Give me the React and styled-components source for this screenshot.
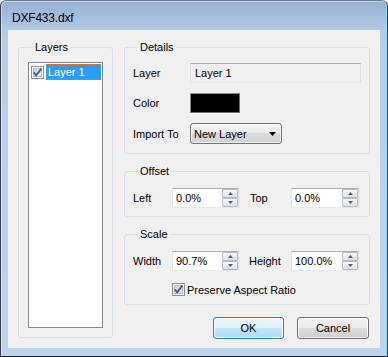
import React from 'react';
import styled, { createGlobalStyle } from 'styled-components';

const GlobalStyle = createGlobalStyle`
  html, body {
    margin: 0;
    padding: 0;
    background: #fff;
  }
  body {
    font-family: "Liberation Sans", Arial, sans-serif;
    font-size: 11px;
    color: #000;
  }
  * {
    box-sizing: border-box;
  }
`;

const Window = styled.div`
  width: 388px;
  height: 357px;
  display: flex;
  flex-direction: column;
  border: 1px solid;
  border-color: #6b7b8f #34404e #1b2129 #34404e;
  border-radius: 6px 6px 0 0;
  background: linear-gradient(#95b0d1 0, #b6cee9 34px, #bcd4ec 100%);
  box-shadow: inset -1px 0 0 #8fdff2, inset 1px 1px 0 rgba(255, 255, 255, 0.45);
  overflow: hidden;
`;

const TitleBar = styled.div`
  height: 29px;
  padding: 10px 0 0 11px;
  font-size: 12px;
  line-height: 14px;
  letter-spacing: -0.2px;
`;

const Client = styled.div`
  flex: 1;
  margin: 0 7px 8px;
  padding: 10px;
  display: flex;
  gap: 11px;
  background: #f0f0f0;
`;

const Group = styled.fieldset`
  margin: 0;
  min-width: 0;
  padding: ${p => p.$pad || '10px 8px 8px'};
  border: 1px solid #d5dfe5;
  border-radius: 3px;
  display: flex;
  flex-direction: column;
  gap: ${p => p.$gap || 10}px;
`;

const LayersGroup = styled(Group)`
  width: 95px;
  flex: none;
`;

const Legend = styled.legend`
  padding: 0 2px;
  margin-left: 5px;
  line-height: 14px;
`;

const List = styled.div`
  flex: 1;
  background: #fff;
  border: 1px solid #828790;
  padding: 1px 1px 0 2px;
`;

const ListItem = styled.div`
  height: 16px;
  display: flex;
  align-items: center;
  gap: 2px;
`;

const ItemLabel = styled.div`
  flex: 1;
  height: 16px;
  padding-left: 1px;
  line-height: 14px;
  color: #fff;
  background: #3399ff;
  border: 1px dotted #d0802a;
`;

const Column = styled.div`
  flex: 1;
  display: flex;
  flex-direction: column;
  gap: 10px;
`;

const Row = styled.div`
  display: flex;
  align-items: center;
  min-height: ${p => p.$h || 20}px;
  padding-left: ${p => p.$indent || 0}px;
  gap: ${p => p.$gap || 0}px;
`;

const Label = styled.span`
  width: ${p => p.$w}px;
  margin-left: ${p => p.$ml || 0}px;
  flex: none;
`;

const TextBox = styled.input`
  flex: 1;
  min-width: 0;
  height: 20px;
  padding: 0 4px;
  font: inherit;
  color: #000;
  background: #f0f0f0;
  border: 1px solid;
  border-color: #abadb3 #dbdfe6 #e3e9ef #e2e3ea;
  outline: none;
`;

const Swatch = styled.div`
  width: 50px;
  height: 20px;
  background: ${p => p.$color};
  border: 1px solid;
  border-color: #8c8c8c #707070 #707070 #8c8c8c;
  box-shadow: 0 1px 0 #fff;
`;

const Select = styled.div`
  width: 92px;
  height: 21px;
  display: flex;
  align-items: center;
  justify-content: space-between;
  padding: 0 5px 0 3px;
  border: 1px solid #707070;
  border-radius: 3px;
  background: linear-gradient(#f2f2f2 0%, #ebebeb 50%, #dddddd 50%, #cfcfcf 100%);
  box-shadow: inset 0 0 0 1px rgba(255, 255, 255, 0.7);
`;

const Spin = styled.div`
  width: ${p => p.$w}px;
  height: 20px;
  display: flex;
  background: #fff;
  border: 1px solid;
  border-color: #abadb3 #dbdfe6 #e3e9ef #e2e3ea;
`;

const SpinInput = styled.input`
  flex: 1;
  min-width: 0;
  padding: 0 0 0 3px;
  border: 0;
  font: inherit;
  color: #000;
  background: transparent;
  outline: none;
`;

const SpinButtons = styled.div`
  width: 16px;
  display: flex;
  flex-direction: column;
`;

const SpinButton = styled.div`
  flex: 1;
  display: flex;
  align-items: center;
  justify-content: center;
  border: 1px solid #b4bcc8;
  border-radius: 1px;
  background: linear-gradient(#f8f8f8, #dfe2e6);
`;

const Buttons = styled.div`
  margin-top: auto;
  margin-bottom: -1px;
  padding-right: 1px;
  display: flex;
  justify-content: flex-end;
  gap: 13px;
`;

const Button = styled.button`
  width: ${p => p.$w}px;
  height: 22px;
  padding: 0;
  font: inherit;
  color: #000;
  border: 1px solid ${p => (p.$default ? '#3c7fb1' : '#707070')};
  border-radius: 3px;
  background: ${p =>
    p.$default
      ? 'linear-gradient(#eaf6fd 0%, #dcf0fb 50%, #c5e6f8 50%, #b0dcf3 100%)'
      : 'linear-gradient(#f2f2f2 0%, #ebebeb 50%, #dddddd 50%, #cfcfcf 100%)'};
  box-shadow: inset 0 0 0 1px rgba(255, 255, 255, 0.75);
`;

const CheckBox = () => (
  <svg width="13" height="13" viewBox="0 0 13 13" style={{ flex: 'none' }}>
    <defs>
      <linearGradient id="cbfill" x1="0" y1="0" x2="1" y2="1">
        <stop offset="0" stopColor="#c9ced6" />
        <stop offset="1" stopColor="#f4f5f6" />
      </linearGradient>
    </defs>
    <rect x="0.5" y="0.5" width="12" height="12" fill="#f4f4f4" stroke="#8e8f8f" />
    <rect x="2.5" y="2.5" width="8" height="8" fill="url(#cbfill)" stroke="#b5b9c0" />
    <path d="M2.8 6.4 L5.2 9.4 L10.4 2.6" fill="none" stroke="#47598f" strokeWidth="1.8" />
  </svg>
);

const Arrow = ({ up, w = 5, h = 3, color = '#4d5d77' }) => (
  <svg width={w} height={h} viewBox={`0 0 ${w} ${h}`}>
    <polygon points={up ? `0,${h} ${w / 2},0 ${w},${h}` : `0,0 ${w},0 ${w / 2},${h}`} fill={color} />
  </svg>
);

const SpinBox = ({ value, width }) => (
  <Spin $w={width}>
    <SpinInput readOnly value={value} />
    <SpinButtons>
      <SpinButton><Arrow up /></SpinButton>
      <SpinButton><Arrow /></SpinButton>
    </SpinButtons>
  </Spin>
);

export default function App() {
  return (
    <>
      <GlobalStyle />
      <Window>
        <TitleBar>DXF433.dxf</TitleBar>
        <Client>
          <LayersGroup $pad="8px 9px 9px">
            <Legend>Layers</Legend>
            <List>
              <ListItem>
                <CheckBox />
                <ItemLabel>Layer 1</ItemLabel>
              </ListItem>
            </List>
          </LayersGroup>

          <Column>
            <Group $pad="9px 8px 9px">
              <Legend>Details</Legend>
              <Row>
                <Label $w={57}>Layer</Label>
                <TextBox readOnly value="Layer 1" />
              </Row>
              <Row>
                <Label $w={57}>Color</Label>
                <Swatch $color="#000" />
              </Row>
              <Row>
                <Label $w={57}>Import To</Label>
                <Select>
                  <span>New Layer</span>
                  <Arrow w={7} h={4} color="#000" />
                </Select>
              </Row>
            </Group>

            <Group>
              <Legend>Offset</Legend>
              <Row>
                <Label $w={39}>Left</Label>
                <SpinBox value="0.0%" width={67} />
                <Label $w={41} $ml={11}>Top</Label>
                <SpinBox value="0.0%" width={68} />
              </Row>
            </Group>

            <Group $gap={12}>
              <Legend>Scale</Legend>
              <Row>
                <Label $w={39}>Width</Label>
                <SpinBox value="90.7%" width={67} />
                <Label $w={42} $ml={10}>Height</Label>
                <SpinBox value="100.0%" width={68} />
              </Row>
              <Row $indent={39} $gap={2} $h={13}>
                <CheckBox />
                <span>Preserve Aspect Ratio</span>
              </Row>
            </Group>

            <Buttons>
              <Button $w={71} $default>OK</Button>
              <Button $w={72}>Cancel</Button>
            </Buttons>
          </Column>
        </Client>
      </Window>
    </>
  );
}
